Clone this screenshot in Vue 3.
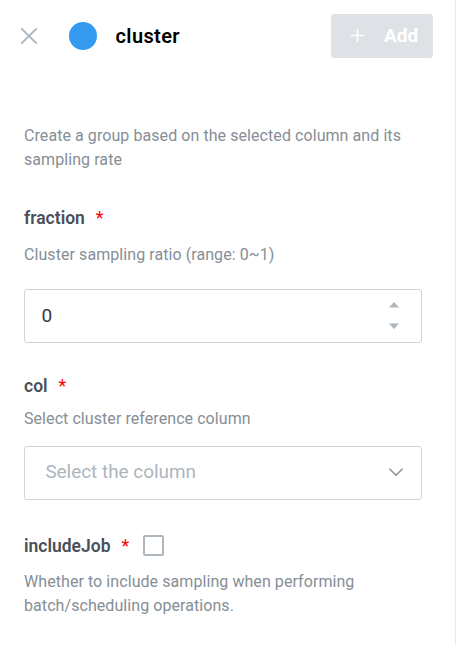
<script setup>
import { ref } from 'vue'

const fraction = ref('0')
const includeJob = ref(false)
</script>

<template>
  <main class="panel">
    <header class="header">
      <button class="close" aria-label="Close">
        <svg width="18" height="18" viewBox="0 0 18 18">
          <path d="M1.3 1.3 16.7 16.7M16.7 1.3 1.3 16.7" />
        </svg>
      </button>
      <span class="dot"></span>
      <h1 class="title">cluster</h1>
      <button class="add">
        <svg width="13" height="13" viewBox="0 0 13 13">
          <path d="M6.5 0V13M0 6.5H13" />
        </svg>
        <span>Add</span>
      </button>
    </header>

    <p class="text intro">Create a group based on the selected column and its sampling rate</p>

    <section class="field fraction">
      <div class="label"><span>fraction</span><span class="star">*</span></div>
      <p class="text">Cluster sampling ratio (range: 0~1)</p>
      <div class="control number">
        <input v-model="fraction" class="input" aria-label="fraction" />
        <div class="spinner">
          <svg width="10" height="6" viewBox="0 0 10 6"><path d="M0 5.5 5 0 10 5.5Z" /></svg>
          <svg width="10" height="6" viewBox="0 0 10 6"><path d="M0 .5 5 6 10 .5Z" /></svg>
        </div>
      </div>
    </section>

    <section class="field col">
      <div class="label"><span>col</span><span class="star">*</span></div>
      <p class="text">Select cluster reference column</p>
      <div class="control select">
        <span class="placeholder">Select the column</span>
        <svg class="chevron" width="14" height="8" viewBox="0 0 14 8">
          <path d="M.5 .7 7 7.2 13.5 .7" />
        </svg>
      </div>
    </section>

    <section class="field job">
      <div class="label">
        <span>includeJob</span><span class="star">*</span>
        <input v-model="includeJob" class="checkbox" type="checkbox" aria-label="includeJob" />
      </div>
      <p class="text">Whether to include sampling when performing batch/scheduling operations.</p>
    </section>
  </main>
</template>

<style>
body {
  margin: 0;
  background: #fff;
}
</style>

<style scoped>
.panel {
  box-sizing: border-box;
  height: 645px;
  width: 456px;
  padding: 14px 0 0 24px;
  border-right: 1px solid #e9ebed;
  font-family: Roboto, sans-serif;
  overflow: hidden;
}
button {
  border: 0;
  padding: 0;
  background: none;
  font-family: inherit;
}
.header {
  display: flex;
  align-items: center;
  height: 44px;
  padding-right: 22px;
  margin-left: -4px;
}
.close {
  display: flex;
  width: 18px;
  height: 18px;
}
.close path {
  fill: none;
  stroke: #adb5bd;
  stroke-width: 1.9;
}
.dot {
  width: 28px;
  height: 28px;
  margin: 0 18.6px 0 31px;
  border-radius: 50%;
  background: #339af0;
}
.title {
  margin: 0;
  font-size: 20px;
  font-weight: 600;
  letter-spacing: 0.35px;
  line-height: 24px;
  color: #000;
}
.add {
  display: flex;
  align-items: center;
  box-sizing: border-box;
  width: 102px;
  height: 44px;
  margin-left: auto;
  padding: 0 0 1px 20px;
  gap: 20px;
  border-radius: 3px;
  background: #dee2e6;
  color: #fff;
  font-size: 19px;
  font-weight: 700;
}
.add path {
  stroke: #fff;
  stroke-width: 1.4;
}
.text {
  width: 398px;
  margin: 0;
  color: #868e96;
  font-size: 16px;
  letter-spacing: 0.07px;
  line-height: 24px;
}
.intro {
  margin-top: 66px;
}
.label {
  display: flex;
  align-items: center;
  height: 24px;
  color: #495057;
  font-size: 17.5px;
  font-weight: 600;
}
.star {
  margin: 0 0 2px 11px;
  color: #f00;
  font-size: 18px;
  font-weight: 400;
}
.fraction {
  margin-top: 34px;
}
.fraction .text {
  margin-top: 13px;
}
.control {
  display: flex;
  align-items: center;
  justify-content: space-between;
  box-sizing: border-box;
  width: 398px;
  height: 54px;
  border: 1px solid #ced4da;
  border-radius: 3px;
}
.number {
  margin-top: 22px;
  padding: 0 22px 2px 16.4px;
}
.input {
  width: 200px;
  height: 24px;
  margin-top: 2px;
  padding: 0;
  border: 0;
  outline: 0;
  background: none;
  color: #343a40;
  font: 400 19px/24px Roboto, sans-serif;
}
.spinner {
  display: flex;
  flex-direction: column;
  gap: 15px;
}
.spinner svg {
  display: block;
  fill: #adb5bd;
}
.col {
  margin-top: 31px;
}
.col .text {
  margin-top: 9px;
}
.select {
  margin-top: 15px;
  padding: 0 18.5px 2px 20.4px;
}
.placeholder {
  color: #adb5bd;
  font-size: 18.9px;
  line-height: 24px;
}
.chevron path {
  fill: none;
  stroke: #868e96;
  stroke-width: 1.5;
}
.job {
  margin-top: 34px;
}
.job .text {
  margin-top: 12px;
}
.checkbox {
  appearance: none;
  box-sizing: border-box;
  width: 21px;
  height: 21px;
  margin: 0 0 2px 14px;
  border: 2px solid #adb5bd;
  border-radius: 2px;
}
</style>
